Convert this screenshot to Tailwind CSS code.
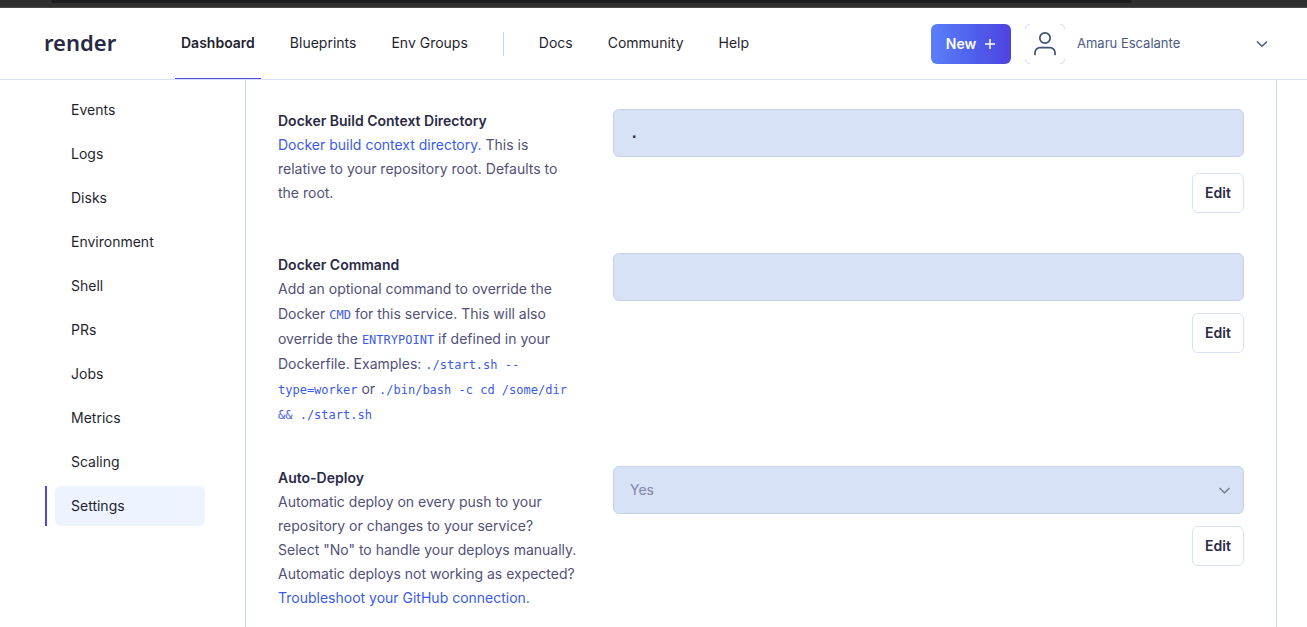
<!DOCTYPE html>
<html lang="en">
<head>
<meta charset="utf-8">
<title>Settings - Render Dashboard</title>
<script src="https://cdn.jsdelivr.net/npm/@tailwindcss/browser@4"></script>
</head>
<body class="flex min-h-screen flex-col bg-white font-['Inter','Liberation_Sans',sans-serif] text-sm text-[#1f1f2e]">
  <div class="h-2 border-b border-[#4b4a49] bg-[#2f2f2f] pr-[175px] pl-[51px]">
    <div class="h-[3px] rounded-b-sm bg-[#1d1e20]"></div>
  </div>

  <header class="flex h-18 items-stretch border-b border-[#d8e2f6] pr-10 pl-11">
    <a href="#" class="mt-5 w-[137px] font-['Noto_Sans',sans-serif] text-[22px] leading-7 font-semibold text-[#2a2a46]">render</a>
    <nav class="flex gap-[35px]" aria-label="Main">
      <a href="#" class="-mx-1.5 flex border-b border-[#4f46e5] px-1.5 pt-[23px] leading-6 font-semibold" aria-current="page">Dashboard</a>
      <a href="#" class="pt-[23px] leading-6">Blueprints</a>
      <a href="#" class="pt-[23px] leading-6">Env Groups</a>
      <span class="mt-6 h-6 w-px bg-[#c8d5ea]"></span>
      <a href="#" class="pt-[23px] leading-6">Docs</a>
      <a href="#" class="pt-[23px] leading-6">Community</a>
      <a href="#" class="pt-[23px] leading-6">Help</a>
    </nav>
    <div class="ml-auto flex items-center">
      <button type="button" class="flex h-10 w-20 items-center justify-center gap-2 rounded-md bg-linear-to-r from-[#5b80f8] via-[#5061ed] to-[#4d44df] font-semibold text-white">New
        <svg class="size-3" viewBox="0 0 12 12" fill="none" stroke="currentColor" stroke-width="1.5"><path d="M6 1v10M1 6h10"/></svg>
      </button>
      <button type="button" class="ml-3.5 flex w-[242px] items-center text-[13px] text-[#4a5a85]">
        <span class="mr-3 flex size-10 items-center justify-center">
          <svg class="size-10 text-[#3d5078]" viewBox="0 0 40 40" fill="none" stroke="currentColor" stroke-width="1.7" stroke-linecap="round" stroke-linejoin="round">
            <path stroke="#d3dcf8" stroke-width="1" d="M.5 4.500Q.5.5 4.500.5M35.500.5Q39.500.5 39.500 4.500M39.500 35.500Q39.500 39.500 35.500 39.500M4.500 39.500Q.5 39.500.5 35.500"/>
            <circle cx="20" cy="14" r="5.200"/>
            <path d="M10 30.500v-1.800a5 5 0 0 1 5-5h10a5 5 0 0 1 5 5v1.800"/>
          </svg>
        </span>
        Amaru Escalante
        <svg class="ml-auto h-2 w-3" viewBox="0 0 12 8" fill="none" stroke="currentColor" stroke-width="1.500"><path d="M2 1.500 7 6.300l5-4.800"/></svg>
      </button>
    </div>
  </header>

  <div class="flex flex-1 pr-[30px] pl-[45px]">
    <nav class="flex w-[200px] shrink-0 flex-col gap-1 pt-2.5 pr-10" aria-label="Service">
      <a href="#" class="ml-2.5 rounded-md px-4 py-2.5 leading-5">Events</a>
      <a href="#" class="ml-2.5 rounded-md px-4 py-2.5 leading-5">Logs</a>
      <a href="#" class="ml-2.5 rounded-md px-4 py-2.5 leading-5">Disks</a>
      <a href="#" class="ml-2.5 rounded-md px-4 py-2.5 leading-5">Environment</a>
      <a href="#" class="ml-2.5 rounded-md px-4 py-2.5 leading-5">Shell</a>
      <a href="#" class="ml-2.5 rounded-md px-4 py-2.5 leading-5">PRs</a>
      <a href="#" class="ml-2.5 rounded-md px-4 py-2.5 leading-5">Jobs</a>
      <a href="#" class="ml-2.5 rounded-md px-4 py-2.5 leading-5">Metrics</a>
      <a href="#" class="ml-2.5 rounded-md px-4 py-2.5 leading-5">Scaling</a>
      <div class="flex border-l-2 border-[#4f46e5] pl-2">
        <a href="#" class="flex-1 rounded-md bg-[#edf4ff] px-4 py-2.5 leading-5" aria-current="page">Settings</a>
      </div>
    </nav>

    <main class="flex flex-1 flex-col gap-10 border-x border-[#c8d5ea] px-8 pt-[29px] pb-3">
      <section class="grid grid-cols-[300fr_631fr] gap-[35px]">
        <div class="leading-6 text-[#515078]">
          <label for="context" class="block font-semibold text-[#2a2a46]">Docker Build Context Directory</label>
          <p><a href="#" class="text-[#3b5bea]">Docker build context directory.</a> This is<br>relative to your repository root. Defaults to<br>the root.</p>
        </div>
        <div class="flex flex-col items-end gap-4">
          <input id="context" type="text" value="." readonly class="h-12 w-full rounded-md border border-[#c5d3ec] bg-[#d8e2f6] px-4 font-['DejaVu_Sans_Mono',monospace] text-sm font-bold text-[#2a2a46]">
          <button type="button" class="h-10 w-13 rounded-md border border-[#d8e2f6] font-semibold text-[#2a2a46]">Edit</button>
        </div>
      </section>

      <section class="grid grid-cols-[300fr_631fr] gap-[35px]">
        <div class="leading-[25px] text-[#515078]">
          <label for="command" class="block leading-6 font-semibold text-[#2a2a46]">Docker Command</label>
          <p class="leading-6">Add an optional command to override the</p>
          <p>Docker <code class="font-['DejaVu_Sans_Mono',monospace] text-xs text-[#3b5bea]">CMD</code> for this service. This will also<br>override the <code class="font-['DejaVu_Sans_Mono',monospace] text-xs text-[#3b5bea]">ENTRYPOINT</code> if defined in your<br>Dockerfile. Examples: <code class="font-['DejaVu_Sans_Mono',monospace] text-xs text-[#3b5bea]">./start.sh --<br>type=worker</code> or <code class="font-['DejaVu_Sans_Mono',monospace] text-xs text-[#3b5bea]">./bin/bash -c cd /some/dir<br>&amp;&amp; ./start.sh</code></p>
        </div>
        <div class="flex flex-col items-end gap-3">
          <input id="command" type="text" readonly class="h-12 w-full rounded-md border border-[#c5d3ec] bg-[#d8e2f6] px-4 font-['DejaVu_Sans_Mono',monospace] text-sm text-[#2a2a46]">
          <button type="button" class="h-10 w-13 rounded-md border border-[#d8e2f6] font-semibold text-[#2a2a46]">Edit</button>
        </div>
      </section>

      <section class="grid grid-cols-[300fr_631fr] gap-[35px]">
        <div class="leading-6 text-[#515078]">
          <label for="autodeploy" class="block font-semibold text-[#2a2a46]">Auto-Deploy</label>
          <p>Automatic deploy on every push to your<br>repository or changes to your service?<br>Select "No" to handle your deploys manually.<br>Automatic deploys not working as expected?<br><a href="#" class="text-[#3b5bea]">Troubleshoot your GitHub connection.</a></p>
        </div>
        <div class="flex flex-col items-end gap-3">
          <div class="relative w-full">
            <select id="autodeploy" disabled class="block h-12 w-full appearance-none rounded-md border border-[#c5d3ec] bg-[#d8e2f6] px-4 text-[#7f84a8] opacity-100">
              <option>Yes</option>
              <option>No</option>
            </select>
            <svg class="pointer-events-none absolute top-5 right-3.5 h-2 w-3 text-[#6d7691]" viewBox="0 0 12 8" fill="none" stroke="currentColor" stroke-width="1.300"><path d="M1.500 2 6.500 6.800l5-4.800"/></svg>
          </div>
          <button type="button" class="h-10 w-13 rounded-md border border-[#d8e2f6] font-semibold text-[#2a2a46]">Edit</button>
        </div>
      </section>
    </main>
  </div>
</body>
</html>
